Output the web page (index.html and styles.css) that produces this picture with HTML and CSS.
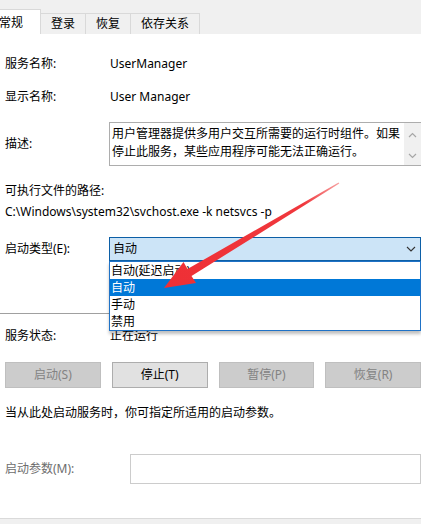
FILE: index.html
```html
<!DOCTYPE html>
<html lang="zh-CN">
  <head>
    <meta charset="UTF-8" />
    <title>UserManager 的属性</title>
    <link rel="stylesheet" href="styles.css">
  </head>
  <body>
    <div class="tabs">
      <div class="tab tab-active">常规</div>
      <div class="tab">登录</div>
      <div class="tab">恢复</div>
      <div class="tab">依存关系</div>
    </div>

    <div class="panel">
      <div class="row row-first">
        <span class="label">服务名称:</span>
        <span class="value">UserManager</span>
      </div>
      <div class="row row-name">
        <span class="label">显示名称:</span>
        <span class="value">User Manager</span>
      </div>

      <div class="row row-desc">
        <span class="label">描述:</span>
        <div class="desc-box">
          <div class="desc-text">用户管理器提供多用户交互所需要的运行时组件。如果停止此服务，某些应用程序可能无法正确运行。</div>
          <div class="scrollbar">
            <svg width="9" height="6" viewBox="0 0 9 6"><path d="M1 5 L4.5 1.5 L8 5" fill="none" stroke="#a6a6a6" stroke-width="1.2"/></svg>
            <svg width="9" height="6" viewBox="0 0 9 6"><path d="M1 1 L4.5 4.5 L8 1" fill="none" stroke="#a6a6a6" stroke-width="1.2"/></svg>
          </div>
        </div>
      </div>

      <div class="path-label">可执行文件的路径:</div>
      <div class="path-value">C:\Windows\system32\svchost.exe -k netsvcs -p</div>

      <div class="row row-type">
        <span class="label">启动类型(E):</span>
        <div class="combo-wrap">
          <div class="combo">
            <span>自动</span>
            <svg width="10" height="6" viewBox="0 0 10 6"><path d="M1 1 L5 5 L9 1" fill="none" stroke="#333" stroke-width="1.1"/></svg>
          </div>
          <ul class="dropdown">
            <li>自动(延迟启动)</li>
            <li class="selected">自动</li>
            <li>手动</li>
            <li>禁用</li>
          </ul>
        </div>
      </div>

      <div class="separator"></div>

      <div class="row row-status">
        <span class="label">服务状态:</span>
        <span class="value">正在运行</span>
      </div>

      <div class="buttons">
        <button class="btn" disabled>启动(S)</button>
        <button class="btn btn-on">停止(T)</button>
        <button class="btn" disabled>暂停(P)</button>
        <button class="btn" disabled>恢复(R)</button>
      </div>

      <div class="hint">当从此处启动服务时，你可指定所适用的启动参数。</div>

      <div class="row row-params">
        <span class="label label-muted">启动参数(M):</span>
        <div class="param-box"></div>
      </div>
    </div>

    <div class="footer"></div>

    <!-- red annotation arrow drawn over the dialog -->
    <svg class="arrow" width="421" height="524" viewBox="0 0 421 524">
      <defs>
        <linearGradient id="fade" x1="164" y1="288" x2="339" y2="183" gradientUnits="userSpaceOnUse">
          <stop offset="0" stop-color="#ee2f35"/>
          <stop offset="0.8" stop-color="#f0383d"/>
          <stop offset="1" stop-color="#f7a0a0"/>
        </linearGradient>
      </defs>
      <polygon fill="url(#fade)" points="164,288 196,283 191.5,276 339.3,183.6 338.6,182.5 187.5,269 183.5,262"/>
    </svg>
  </body>
</html>
```

FILE: styles.css
```css
body {
  margin: 0;
  width: 421px;
  height: 524px;
  overflow: hidden;
  background-color: #ffffff;
  font-family: "Microsoft YaHei", "Noto Sans", "Noto Sans CJK SC", sans-serif;
  font-size: 12px;
  line-height: 16px;
  color: #000;
  position: relative;
}

.tabs {
  height: 34px;
  background-color: #f0f0f0;
  display: flex;
  align-items: flex-end;
  box-sizing: border-box;
}
.tab {
  height: 21px;
  box-sizing: border-box;
  padding: 2px 10px 0 10px;
  border: 1px solid #d9d9d9;
  border-bottom: none;
  margin-left: -1px;
  background-color: #f0f0f0;
}
.tab-active {
  height: 25px;
  padding: 5px 17px 0 0;
  margin-left: -2px;
  background-color: #ffffff;
  border-color: #d9d9d9;
  z-index: 1;
}

.panel {
  height: 484px;
  padding-left: 5px;
  box-sizing: border-box;
}

.row {
  display: flex;
  align-items: center;
}
.label {
  width: 105px;
  flex-shrink: 0;
}
.label-muted {
  width: 125px;
  color: #6d6d6d;
}
.row-first {
  padding-top: 22px;
}
.row-name {
  margin-top: 17px;
}

.row-desc {
  margin-top: 17px;
}
.desc-box {
  margin-left: -1px;
  flex: 1;
  height: 44px;
  box-sizing: border-box;
  border: 1px solid #adadad;
  border-right: none;
  display: flex;
}
.desc-text {
  flex: 1;
  padding: 2px 0 0 2px;
  line-height: 18px;
}
.scrollbar {
  width: 17px;
  background-color: #f0f0f0;
  display: flex;
  flex-direction: column;
  align-items: center;
  justify-content: space-between;
  padding: 9px 0 6px 0;
}

.path-label {
  margin-top: 17px;
}
.path-value {
  margin-top: 5px;
}

.row-type {
  margin-top: 17px;
}
.combo-wrap {
  position: relative;
  flex: 1;
  margin-left: -1px;
}
.combo {
  height: 24px;
  box-sizing: border-box;
  background-color: #cce4f7;
  border: 1px solid #0c5fa6;
  display: flex;
  align-items: center;
  justify-content: space-between;
  padding: 0 4px 0 3px;
}
.dropdown {
  position: absolute;
  top: 24px;
  left: 0;
  right: 0;
  margin: 0;
  padding: 0;
  list-style: none;
  background-color: #ffffff;
  border: 1px solid #1f72c6;
  box-shadow: 0 3px 3px rgba(0, 0, 0, 0.25);
  z-index: 2;
}
.dropdown li {
  height: 17px;
  line-height: 17px;
  padding-left: 1px;
}
.dropdown li.selected {
  background-color: #0078d7;
  color: #ffffff;
}

.separator {
  margin-top: 52px;
  margin-left: -5px;
  height: 1px;
  background-color: #a0a0a0;
}

.row-status {
  margin-top: 14px;
}

.buttons {
  display: flex;
  gap: 11px;
  margin-top: 18px;
}
.btn {
  flex: 1;
  height: 26px;
  font: inherit;
  border: 1px solid #bfbfbf;
  background-color: #cccccc;
  color: #838383;
  padding: 0;
}
.btn-on {
  background-color: #e1e1e1;
  border-color: #adadad;
  color: #000;
}

.hint {
  margin-top: 17px;
}

.row-params {
  margin-top: 33px;
}
.param-box {
  flex: 1;
  height: 30px;
  box-sizing: border-box;
  border: 1px solid #cccccc;
  background-color: #ffffff;
}

.footer {
  height: 6px;
  background-color: #f0f0f0;
  border-top: 1px solid #dadada;
}

.arrow {
  position: absolute;
  top: 0;
  left: 0;
  pointer-events: none;
  z-index: 3;
}
```
